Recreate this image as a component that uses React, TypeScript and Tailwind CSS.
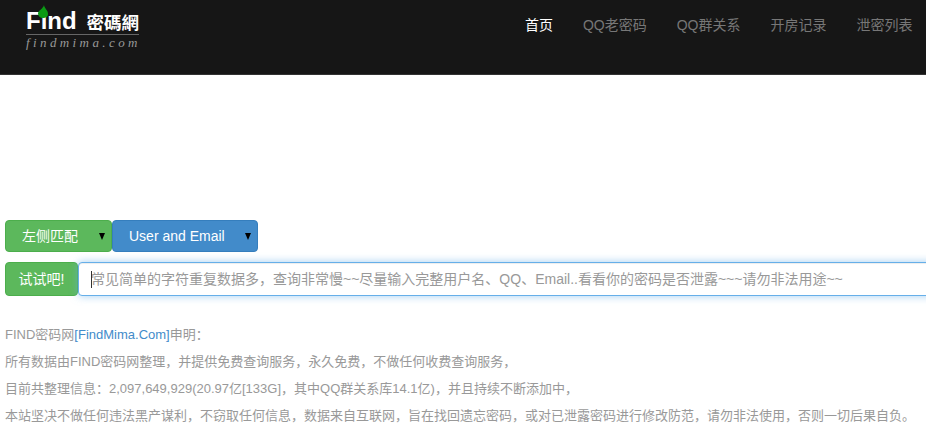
export default function App() {
  const font = "font-['Liberation_Sans','Noto_Sans_CJK_SC',sans-serif]";
  const links = [
    { t: "首页", c: "text-white" },
    { t: "QQ老密码", c: "text-[#777]" },
    { t: "QQ群关系", c: "text-[#777]" },
    { t: "开房记录", c: "text-[#777]" },
    { t: "泄密列表", c: "text-[#777]" },
  ];
  return (
    <div className={`${font} w-[926px] h-[435px] overflow-hidden bg-white text-[14px]`}>
      <header className="h-[75px] bg-[#161616] border-b border-[#333] flex justify-between">
        <div className="ml-[26px] mt-[5px] w-[113px] relative">
          <div className="flex items-end h-[28px] border-b border-[#666] box-content pb-[1px] whitespace-nowrap">
            <span className="text-white text-[24px] font-bold leading-none font-['Liberation_Sans',sans-serif] w-[61px] mb-0">Find</span>
            <span className="text-white text-[17.5px] font-bold leading-none font-['Noto_Sans_CJK_TC',sans-serif] mb-[3px]">密碼網</span>
          </div>
          <svg className="absolute left-[12px] top-0 z-10" width="10" height="13" viewBox="0 0 10 13">
            <path d="M6 0 C6 3 10 5 10 9 C10 12 7.5 13 5 13 C2 13 0 11 0 8.5 C0 5.5 5 4 6 0 Z" fill="#0b9a14" />
          </svg>
          <div className="text-[#999] text-[13px] italic leading-none mt-[1px] tracking-[3.4px] font-['Liberation_Serif',serif] whitespace-nowrap">findmima.com</div>
        </div>
        <nav className="flex mr-[-1.5px]">
          {links.map((l) => (
            <a key={l.t} className={`px-[15px] pt-[15px] leading-[20px] ${l.c}`}>{l.t}</a>
          ))}
        </nav>
      </header>
      <main className="pl-[5px] pt-[145px]">
        <div className="flex h-[32px] text-white">
          <div className="w-[107px] bg-[#5cb85c] border border-[#4cae4c] rounded-[4px] flex items-center relative pl-[16px]">
            左侧匹配
            <span className="absolute right-[6px] top-[12px] w-0 h-0 border-x-[3.5px] border-x-transparent border-t-[7px] border-t-black" />
          </div>
          <div className="w-[146px] bg-[#428bca] border border-[#357ebd] rounded-[4px] flex items-center relative pl-[16px]">
            User and Email
            <span className="absolute right-[6px] top-[12px] w-0 h-0 border-x-[3.5px] border-x-transparent border-t-[7px] border-t-black" />
          </div>
        </div>
        <div className="flex h-[34px] mt-[10px]">
          <div className="w-[73px] bg-[#5cb85c] border border-[#4cae4c] rounded-[4px] text-white flex items-center justify-center shrink-0">
            试试吧!
          </div>
          <div className="w-[860px] shrink-0 bg-white border border-[#66afe9] rounded-[4px] shadow-[inset_0_1px_1px_rgba(0,0,0,.075),0_0_8px_rgba(102,175,233,.6)] flex items-center pl-[12px] text-[#999] whitespace-nowrap relative">
            <span className="absolute left-[12px] top-[8px] w-px h-[17px] bg-[#333]" />
            常见简单的字符重复数据多，查询非常慢~~尽量输入完整用户名、QQ、Email..看看你的密码是否泄露~~~请勿非法用途~~
          </div>
        </div>
        <div className="mt-[25px] text-[13px] text-[#999] leading-[27px] whitespace-nowrap">
          <p>FIND密码网<span className="text-[#428bca]">[FindMima.Com]</span>申明：</p>
          <p>所有数据由FIND密码网整理，并提供免费查询服务，永久免费，不做任何收费查询服务，</p>
          <p>目前共整理信息：2,097,649,929(20.97亿[133G]，其中QQ群关系库14.1亿)，并且持续不断添加中，</p>
          <p>本站坚决不做任何违法黑产谋利，不窃取任何信息，数据来自互联网，旨在找回遗忘密码，或对已泄露密码进行修改防范，请勿非法使用，否则一切后果自负。</p>
        </div>
      </main>
    </div>
  );
}
